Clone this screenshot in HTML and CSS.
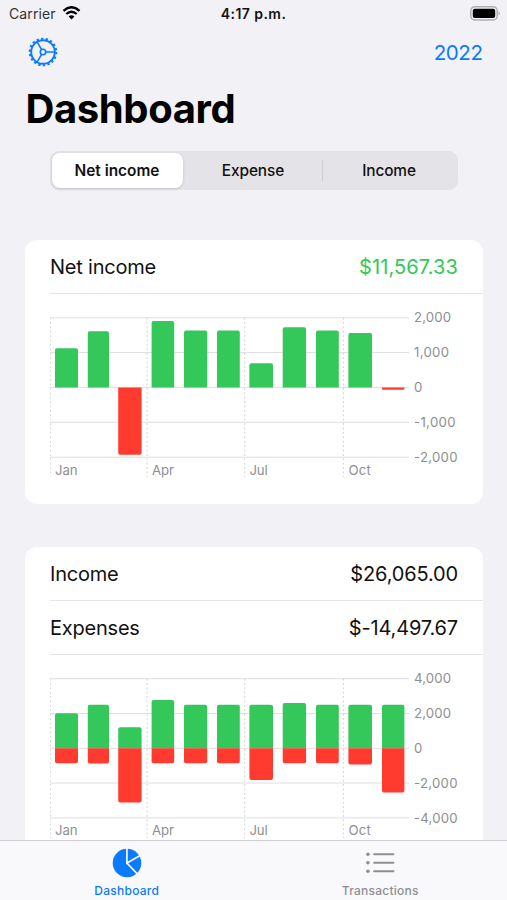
FILE: index.html
```
<!DOCTYPE html>
<html lang="en">
<head>
<meta charset="UTF-8">
<meta name="viewport" content="width=device-width, initial-scale=1.0">
<title>Dashboard</title>
<link rel="stylesheet" href="styles.css">
</head>
<body>
<div class="status-bar">
<div class="carrier">
<span>Carrier</span>
<svg class="wifi" width="19" height="14" viewBox="0 0 18 14">
<path d="M1 4.9 Q9 -2.3 17 4.9" fill="none" stroke="#000" stroke-width="2.5"/>
<path d="M3.8 8 Q9 3.4 14.2 8" fill="none" stroke="#000" stroke-width="2.3"/>
<path d="M9 13.6 L6.1 10.4 Q9 7.9 11.9 10.4 Z"/>
</svg>
</div>
<div class="clock">4:17 p.m.</div>
<svg class="battery" width="31" height="15" viewBox="0 0 31 15">
<rect x="0.8" y="0.8" width="26.4" height="13.2" rx="4" fill="#f2f1f6" stroke="#b0b0b4" stroke-width="1.5"/>
<rect x="2.8" y="2.8" width="22.4" height="9.2" rx="2"/>
<path d="M28.6 5.2 Q31 7.4 28.6 9.6 Z" fill="#a5a5a9"/>
</svg>
</div>
<div class="nav-bar">
<svg class="gear" width="30" height="30" viewBox="0 0 30 30">
<circle cx="15" cy="15" r="13.3" fill="none" stroke="#0a7aff" stroke-width="2" stroke-dasharray="2.3 2.3426"/>
<circle cx="15" cy="15" r="11.8" fill="none" stroke="#0a7aff" stroke-width="1.9"/>
<circle cx="15" cy="15" r="2.7" fill="none" stroke="#0a7aff" stroke-width="1.6"/>
<path d="M17.7 15 H26.8 M13.6 12.6 L9.1 4.8 M13.6 17.4 L9.1 25.2" stroke="#0a7aff" stroke-width="1.6"/>
</svg>
<span class="year">2022</span>
</div>
<h1>Dashboard</h1>
<div class="segments">
<div class="segment active">Net income</div>
<div class="segment middle">Expense</div>
<div class="segment divided">Income</div>
</div>
<div class="content">
<div class="card">
<div class="row"><span>Net income</span><span class="amount green">$11,567.33</span></div>
<svg class="chart" width="432" height="210" viewBox="50 294 432 210">
<g class="grid">
<path d="M50 317.8 H409 M50 352.6 H409 M50 387.4 H409 M50 422.3 H409 M50 457.2 H409"/>
<path class="dashed" d="M50.3 317.5 V477 M147 317.5 V477 M244.7 317.5 V477 M343.4 317.5 V477"/>
</g>
<g class="up">
<path d="M55 387.4 V350.3 q0 -2 2 -2 H76 q2 0 2 2 V387.4 Z"/>
<path d="M87.8 387.4 V333.2 q0 -2 2 -2 H107 q2 0 2 2 V387.4 Z"/>
<path d="M151.6 387.4 V323 q0 -2 2 -2 H172.2 q2 0 2 2 V387.4 Z"/>
<path d="M184 387.4 V332.4 q0 -2 2 -2 H205.2 q2 0 2 2 V387.4 Z"/>
<path d="M217 387.4 V332.4 q0 -2 2 -2 H237.8 q2 0 2 2 V387.4 Z"/>
<path d="M249.4 387.4 V365.2 q0 -2 2 -2 H271 q2 0 2 2 V387.4 Z"/>
<path d="M282.7 387.4 V329.2 q0 -2 2 -2 H304.1 q2 0 2 2 V387.4 Z"/>
<path d="M316 387.4 V332.4 q0 -2 2 -2 H336.8 q2 0 2 2 V387.4 Z"/>
<path d="M348.4 387.4 V335 q0 -2 2 -2 H370 q2 0 2 2 V387.4 Z"/>
</g>
<g class="down">
<path d="M118.2 387.4 V452.7 q0 2 2 2 H139.6 q2 0 2 -2 V387.4 Z"/>
<path d="M382 387.4 V388.8 q0 1 1 1 H403.4 q1 0 1 -1 V387.4 Z"/>
</g>
<g class="labels">
<text x="55" y="474.6" textLength="22.5">Jan</text>
<text x="152" y="474.6" textLength="22">Apr</text>
<text x="249.6" y="474.6" textLength="18">Jul</text>
<text x="348.4" y="474.6" textLength="22.5">Oct</text>
<text x="414" y="322.3" textLength="37">2,000</text>
<text x="414" y="357.2" textLength="35">1,000</text>
<text x="414" y="392" textLength="8.5">0</text>
<text x="414" y="426.9" textLength="41.5">-1,000</text>
<text x="414" y="461.8" textLength="43.5">-2,000</text>
</g>
</svg>
</div>
<div class="card">
<div class="row"><span>Income</span><span class="amount">$26,065.00</span></div>
<div class="row"><span>Expenses</span><span class="amount">$-14,497.67</span></div>
<svg class="chart" width="432" height="209" viewBox="50 655 432 209">
<g class="grid">
<path d="M50 678.7 H409 M50 713.6 H409 M50 748.3 H409 M50 783 H409 M50 817.9 H409"/>
<path class="dashed" d="M50.3 678.5 V838 M147 678.5 V838 M244.7 678.5 V838 M343.4 678.5 V838"/>
</g>
<g class="up">
<path d="M55 748.2 V715.3 q0 -2 2 -2 H76 q2 0 2 2 V748.2 Z"/>
<path d="M87.8 748.2 V706.7 q0 -2 2 -2 H107 q2 0 2 2 V748.2 Z"/>
<path d="M118.2 748.2 V729.2 q0 -2 2 -2 H139.6 q2 0 2 2 V748.2 Z"/>
<path d="M151.6 748.2 V702 q0 -2 2 -2 H172.2 q2 0 2 2 V748.2 Z"/>
<path d="M184 748.2 V706.7 q0 -2 2 -2 H205.2 q2 0 2 2 V748.2 Z"/>
<path d="M217 748.2 V706.7 q0 -2 2 -2 H237.8 q2 0 2 2 V748.2 Z"/>
<path d="M249.4 748.2 V706.7 q0 -2 2 -2 H271 q2 0 2 2 V748.2 Z"/>
<path d="M282.7 748.2 V705 q0 -2 2 -2 H304.1 q2 0 2 2 V748.2 Z"/>
<path d="M316 748.2 V706.7 q0 -2 2 -2 H336.8 q2 0 2 2 V748.2 Z"/>
<path d="M348.4 748.2 V706.7 q0 -2 2 -2 H370 q2 0 2 2 V748.2 Z"/>
<path d="M382 748.2 V706.7 q0 -2 2 -2 H402.4 q2 0 2 2 V748.2 Z"/>
</g>
<g class="down">
<path d="M55 748.2 V761.3 q0 2 2 2 H76 q2 0 2 -2 V748.2 Z"/>
<path d="M87.8 748.2 V761.6 q0 2 2 2 H107 q2 0 2 -2 V748.2 Z"/>
<path d="M118.2 748.2 V800.6 q0 2 2 2 H139.6 q2 0 2 -2 V748.2 Z"/>
<path d="M151.6 748.2 V761.3 q0 2 2 2 H172.2 q2 0 2 -2 V748.2 Z"/>
<path d="M184 748.2 V761.3 q0 2 2 2 H205.2 q2 0 2 -2 V748.2 Z"/>
<path d="M217 748.2 V761.3 q0 2 2 2 H237.8 q2 0 2 -2 V748.2 Z"/>
<path d="M249.4 748.2 V778 q0 2 2 2 H271 q2 0 2 -2 V748.2 Z"/>
<path d="M282.7 748.2 V761.3 q0 2 2 2 H304.1 q2 0 2 -2 V748.2 Z"/>
<path d="M316 748.2 V761.3 q0 2 2 2 H336.8 q2 0 2 -2 V748.2 Z"/>
<path d="M348.4 748.2 V762.6 q0 2 2 2 H370 q2 0 2 -2 V748.2 Z"/>
<path d="M382 748.2 V790.5 q0 2 2 2 H402.4 q2 0 2 -2 V748.2 Z"/>
</g>
<g class="labels">
<text x="55" y="835.4" textLength="22.5">Jan</text>
<text x="152" y="835.4" textLength="22">Apr</text>
<text x="249.6" y="835.4" textLength="18">Jul</text>
<text x="348.4" y="835.4" textLength="22.5">Oct</text>
<text x="414" y="683.2" textLength="37">4,000</text>
<text x="414" y="718.2" textLength="37">2,000</text>
<text x="414" y="752.8" textLength="8.5">0</text>
<text x="414" y="787.7" textLength="43.5">-2,000</text>
<text x="414" y="822.5" textLength="43.5">-4,000</text>
</g>
</svg>
</div>
</div>
<div class="tab-bar">
<div class="tab selected">
<svg width="30" height="30" viewBox="0 0 30 30">
<circle cx="15" cy="15" r="14.3" fill="#0a7aff"/>
<path d="M14.9 0 V15 L28.2 7.6 M14.9 15 L25 25.6" fill="none" stroke="#f9f9fb" stroke-width="1.7"/>
</svg>
<span>Dashboard</span>
</div>
<div class="tab">
<svg width="30" height="30" viewBox="0 0 30 30">
<g fill="#8e8e92">
<circle cx="2.9" cy="6.2" r="1.8"/>
<circle cx="2.9" cy="14.8" r="1.8"/>
<circle cx="2.9" cy="23.2" r="1.8"/>
</g>
<path d="M9.2 6.2 H28.4 M9.2 14.8 H28.4 M9.2 23.2 H28.4" stroke="#8e8e92" stroke-width="2.1" stroke-linecap="round"/>
</svg>
<span>Transactions</span>
</div>
</div>
</body>
</html>
```

FILE: styles.css
```
/* Reset styles */
* {
margin: 0;
padding: 0;
box-sizing: border-box;
}
body {
background-color: #f2f1f6;
font-family: Inter, "Liberation Sans", sans-serif;
color: #111;
display: flex;
flex-direction: column;
height: 900px;
overflow: hidden;
}
svg {
display: block;
flex-shrink: 0;
}
/* Status bar styles */
.status-bar {
display: grid;
grid-template-columns: 1fr auto 1fr;
align-items: center;
height: 27px;
padding: 0 6px 0 9px;
font-size: 14px;
}
.carrier {
display: flex;
align-items: center;
gap: 6px;
letter-spacing: 0.1px;
color: #333;
}
.wifi {
margin-top: -2px;
}
.clock {
font-weight: 600;
letter-spacing: 0.45px;
margin-left: -3px;
}
.battery {
justify-self: end;
}
/* Navigation styles */
.nav-bar {
display: flex;
justify-content: space-between;
align-items: center;
height: 51px;
padding: 0 24.5px 1px 27.5px;
}
.year {
font-size: 20.5px;
letter-spacing: -0.4px;
color: #0a7aff;
}
h1 {
font-size: 40px;
line-height: 50px;
font-weight: 700;
letter-spacing: -0.4px;
color: #000;
height: 73px;
padding: 6px 0 0 25.5px;
}
/* Segmented control */
.segments {
display: flex;
height: 39px;
margin: 0 49px 0 50px;
padding: 2px;
border-radius: 9px;
background-color: #e4e3e8;
flex-shrink: 0;
}
.segment {
flex: 1;
display: flex;
align-items: center;
justify-content: center;
font-size: 15.4px;
font-weight: 500;
letter-spacing: -0.1px;
position: relative;
}
.segment.active {
background-color: #fff;
border-radius: 8px;
font-weight: 600;
letter-spacing: 0;
flex: 0 0 131px;
padding-right: 1px;
box-shadow: 0 1px 3px rgba(0, 0, 0, 0.15);
}
.segment.middle {
flex: 0 0 139px;
padding-left: 1px;
}
.segment.divided::before {
content: "";
position: absolute;
left: 0;
top: 7px;
width: 1px;
height: 21px;
background-color: #cfced4;
}
/* Cards */
.content {
flex: 1;
overflow: hidden;
padding: 50px 24.5px 0 25px;
}
.card {
background-color: #fff;
border-radius: 12px;
padding-left: 25px;
margin-bottom: 43px;
overflow: hidden;
}
.row {
display: flex;
justify-content: space-between;
align-items: center;
height: 54px;
padding-right: 24.5px;
border-bottom: 1px solid #e5e5e7;
font-size: 20px;
letter-spacing: -0.22px;
}
.amount {
letter-spacing: -0.15px;
}
.amount.green {
color: #34c759;
letter-spacing: 0.1px;
}
/* Chart styles */
.grid path {
fill: none;
stroke: #dedee0;
stroke-width: 1;
}
.grid .dashed {
stroke: #d4d4d6;
stroke-dasharray: 2 2.4;
}
.up {
fill: #34c759;
}
.down {
fill: #ff3b30;
}
.labels {
fill: #8e8e92;
font-size: 13.2px;
}
/* Tab bar styles */
.tab-bar {
display: flex;
height: 60px;
flex-shrink: 0;
background-color: #f9f9fb;
border-top: 1px solid #cfcfd2;
}
.tab {
flex: 1;
display: flex;
flex-direction: column;
align-items: center;
padding-top: 7px;
gap: 5px;
font-size: 12px;
line-height: 15px;
font-weight: 500;
letter-spacing: 0.25px;
color: #8e8e92;
}
.tab.selected {
color: #0a7aff;
}
```
